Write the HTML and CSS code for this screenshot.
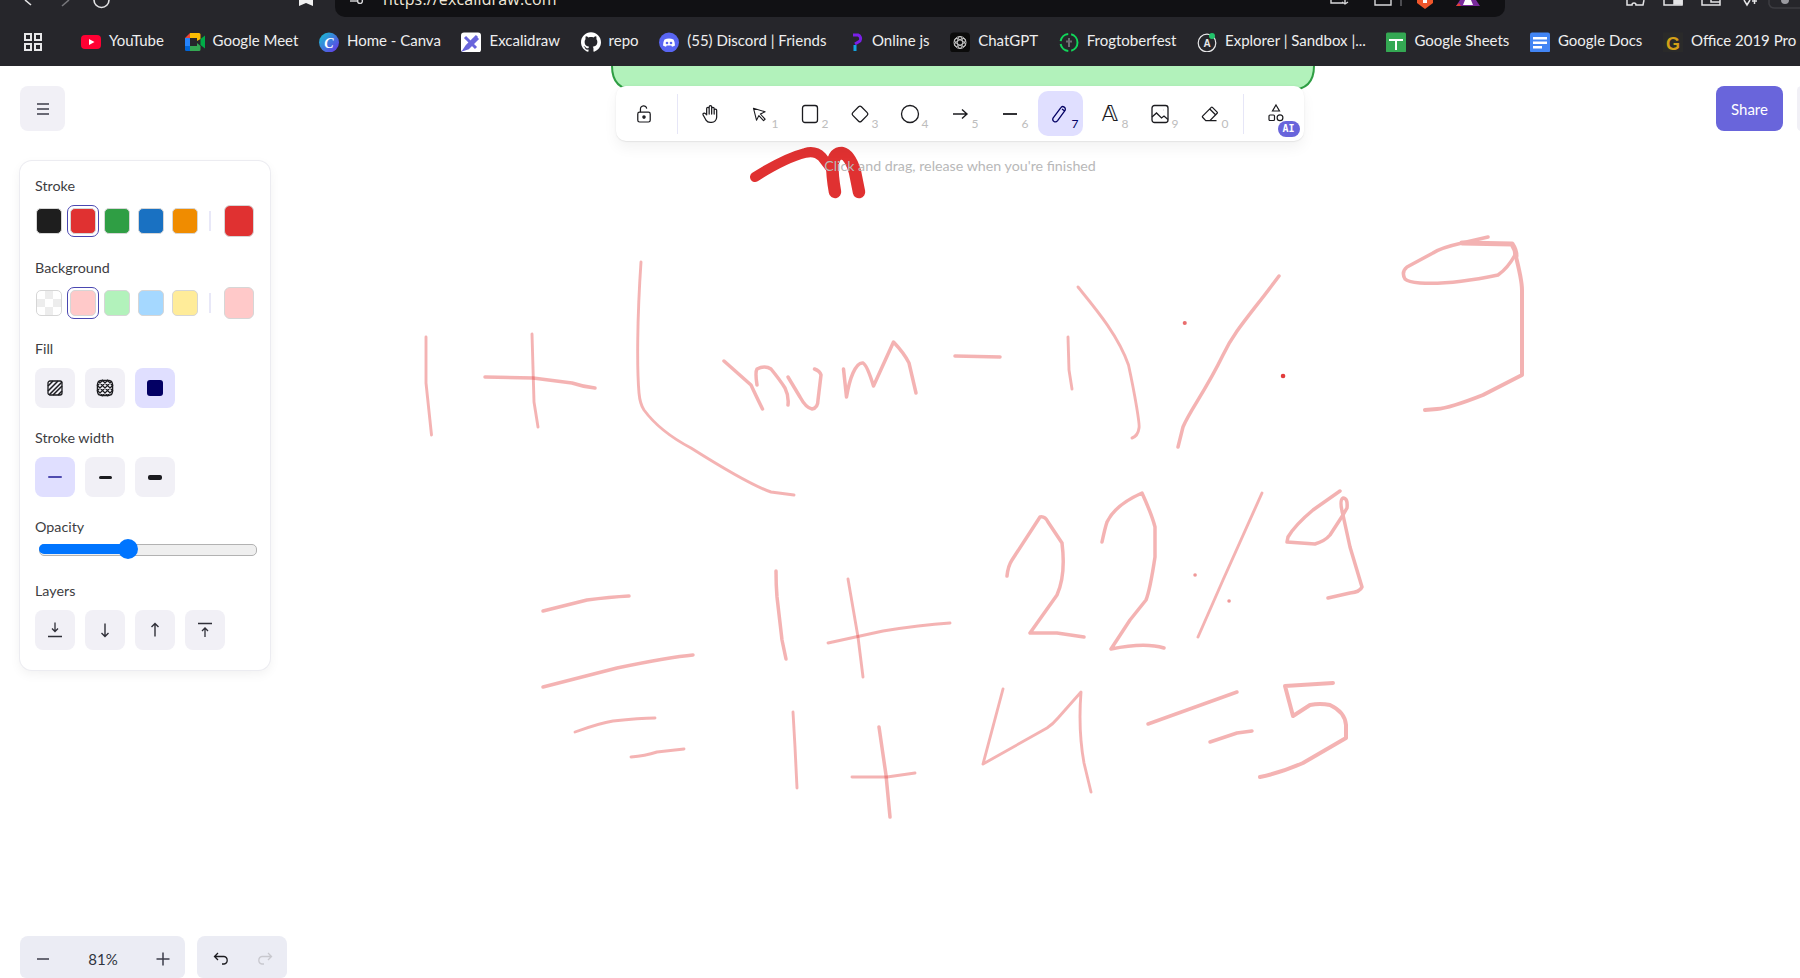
FILE: index.html
```html
<!DOCTYPE html>
<html lang="en">
<head>
<meta charset="utf-8">
<title>Excalidraw</title>
<link rel="stylesheet" href="styles.css">
</head>
<body>
<header class="chrome">
  <div class="topbar">
    <svg class="nav" width="335" height="17" viewBox="0 0 335 17" fill="none" stroke="#e4e4e6" stroke-width="1.6">
      <path d="M25 0l6 5"/>
      <path d="M69 0l-7 6" stroke="#77777c"/>
      <path d="M94 0a7.5 7.5 0 0 0 15 0" />
      <path d="M299 0h14v6l-7-3-7 3z" fill="#f1f1f1" stroke="none"/>
    </svg>
    <div class="url">
      <svg class="tune" width="14" height="17" viewBox="0 0 14 17" fill="none" stroke="#d8d8da" stroke-width="1.4"><path d="M0 1h7"/><circle cx="10" cy="1" r="2.4"/></svg>
      <span class="url-text">https://excalidraw.com</span>
      <svg class="url-tools" width="155" height="17" viewBox="0 0 155 17" fill="none" stroke="#d8d8da" stroke-width="1.4">
        <path d="M2 0v3h12M16 0v4M13 2l3 2 3-2"/>
        <path d="M46 0v5h16V0"/>
        <path d="M72 0v6" stroke="#66666b"/>
        <path d="M88 0h16v3l-8 6-8-6z" fill="#f0562a" stroke="none"/><path d="M94 0h4v3h-4z" fill="#fff" stroke="none"/>
        <path d="M131 0h16l4 6h-24z" fill="#7a2a9c" stroke="none"/><path d="M136 0h6l2 5h-10z" fill="#fff" stroke="none"/><path d="M127 6l3-3 2 3z" fill="#e8402f" stroke="none"/>
      </svg>
    </div>
    <svg class="ext" width="295" height="17" viewBox="0 0 295 17" fill="none" stroke="#e4e4e6" stroke-width="1.5">
      <path d="M122 0v5h5a2 2 0 0 1 4 0h7l1-5"/>
      <path d="M159 0v5h18V0"/><path d="M169 0h8v4h-8z" fill="#e4e4e6"/>
      <path d="M197 0v5h18V0M206 0v2h9"/>
      <path d="M239 0l3 5 3-5M247 1h5M249.500 0v4"/>
      <path d="M264 0v4a6 6 0 0 0 6 4h25" stroke="#3c3c41"/>
      <circle cx="280" cy="0" r="4" fill="#9a9aa0" stroke="none"/>
    </svg>
  </div>
  <nav class="bookmarks">
    <svg class="apps" width="18" height="18" viewBox="0 0 18 18" fill="none" stroke="#e8e8ea" stroke-width="2"><rect x="1" y="1" width="6" height="6"/><rect x="11" y="1" width="6" height="6"/><rect x="1" y="11" width="6" height="6"/><rect x="11" y="11" width="6" height="6"/></svg>
    <span class="bar-divider"></span>
    <a class="bm">
      <svg width="20" height="20" viewBox="0 0 20 20"><rect y="3" width="20" height="14" rx="4" fill="#ff0033"/><path d="M8 7l5.500 3L8 13z" fill="#fff"/></svg>
      <span>YouTube</span>
    </a>
    <a class="bm">
      <svg width="20" height="20" viewBox="0 0 20 20"><path d="M0 6l5-5v5z" fill="#ea4335"/><path d="M5 1h9a1.500 1.500 0 0 1 1.500 1.500V7L12 9V6H5z" fill="#fbbc04"/><path d="M0 6h5v8H0z" fill="#2684fc"/><path d="M0 14h5v5H1.500A1.500 1.500 0 0 1 0 17.500z" fill="#0066da"/><path d="M5 14h7v-3l3.500 3v3.500A1.500 1.500 0 0 1 14 19H5z" fill="#34a853"/><path d="M15.500 7L20 3.500v13L15.500 13z" fill="#00ac47"/><path d="M5 6h7v8H5z" fill="#26262b"/></svg>
      <span>Google Meet</span>
    </a>
    <a class="bm">
      <svg width="20" height="20" viewBox="0 0 20 20"><defs><linearGradient id="canva" x1="0" y1="0" x2="1" y2="1"><stop offset="0" stop-color="#13c6cf"/><stop offset="1" stop-color="#6a2ee8"/></linearGradient></defs><circle cx="10" cy="10.500" r="10" fill="url(#canva)"/><text class="canva-c" x="10" y="16" text-anchor="middle">C</text></svg>
      <span>Home - Canva</span>
    </a>
    <a class="bm">
      <svg width="20" height="20" viewBox="0 0 20 20"><rect width="20" height="20" y="0.500" rx="3" fill="#fff"/><path d="M4 5l11 11M16 4L6 14 4 17l3-1 10-10" stroke="#6965db" stroke-width="3" fill="none"/></svg>
      <span>Excalidraw</span>
    </a>
    <a class="bm">
      <svg width="20" height="20" viewBox="0 0 24 24"><path fill="#fff" d="M12 .297c-6.630 0-12 5.373-12 12 0 5.303 3.438 9.800 8.205 11.385.6.113.82-.258.82-.577 0-.285-.01-1.040-.015-2.040-3.338.724-4.042-1.610-4.042-1.610C4.422 18.070 3.633 17.700 3.633 17.700c-1.087-.744.084-.729.084-.729 1.205.084 1.838 1.236 1.838 1.236 1.070 1.835 2.809 1.305 3.495.998.108-.776.417-1.305.76-1.605-2.665-.3-5.466-1.332-5.466-5.930 0-1.310.465-2.380 1.235-3.220-.135-.303-.54-1.523.105-3.176 0 0 1.005-.322 3.300 1.230.96-.267 1.980-.399 3-.405 1.020.006 2.040.138 3 .405 2.280-1.552 3.285-1.230 3.285-1.230.645 1.653.24 2.873.12 3.176.765.84 1.230 1.910 1.230 3.220 0 4.610-2.805 5.625-5.475 5.920.42.36.81 1.096.81 2.220 0 1.606-.015 2.896-.03 3.286 0 .315.21.69.825.57C20.565 22.092 24 17.592 24 12.297c0-6.627-5.373-12-12-12"/></svg>
      <span>repo</span>
    </a>
    <a class="bm">
      <svg width="20" height="20" viewBox="0 0 20 20"><circle cx="10" cy="10.500" r="10" fill="#5865f2"/><path d="M5.500 7.500q4.500-2 9 0 1.500 2.500 1.500 6-1.500 1-3 1.200l-.7-1.200h-4.600l-.7 1.200q-1.500-.2-3-1.200 0-3.500 1.500-6z" fill="#fff"/><circle cx="8" cy="11" r="1.300" fill="#5865f2"/><circle cx="12" cy="11" r="1.300" fill="#5865f2"/></svg>
      <span>(55) Discord | Friends</span>
    </a>
    <a class="bm bm-wide">
      <svg width="20" height="20" viewBox="0 0 20 20" fill="none" stroke-width="3"><path d="M6 3h5a4 4 0 0 1 2 6l-5 3" stroke="#7a1fe8"/><path d="M8 13v6" stroke="#13a5e0"/></svg>
      <span>Online js</span>
    </a>
    <a class="bm">
      <svg width="20" height="20" viewBox="0 0 20 20" fill="none" stroke="#c6c6c6" stroke-width="1"><rect y="0.500" width="20" height="20" rx="4" fill="#0b0b0b" stroke="none"/><circle cx="10" cy="10.500" r="6"/><ellipse cx="10" cy="10.500" rx="6" ry="2.500" transform="rotate(30 10 10.500)"/><ellipse cx="10" cy="10.500" rx="6" ry="2.500" transform="rotate(-30 10 10.500)"/><ellipse cx="10" cy="10.500" rx="6" ry="2.500" transform="rotate(90 10 10.500)"/></svg>
      <span>ChatGPT</span>
    </a>
    <a class="bm">
      <svg width="20" height="20" viewBox="0 0 20 20" fill="none"><circle cx="10" cy="10.500" r="8.500" stroke="#11d65a" stroke-width="2" stroke-dasharray="11 3"/><path d="M10 6v9M7 9.500h6" stroke="#6d6d72" stroke-width="2"/></svg>
      <span>Frogtoberfest</span>
    </a>
    <a class="bm">
      <svg width="20" height="20" viewBox="0 0 20 20" fill="none"><circle cx="10" cy="11" r="8.800" stroke="#e8e8ea" stroke-width="1.200"/><text class="explorer-a" x="10" y="15" text-anchor="middle">A</text><circle cx="15" cy="4" r="3" fill="#22c36b"/></svg>
      <span>Explorer | Sandbox |...</span>
    </a>
    <a class="bm">
      <svg width="20" height="20" viewBox="0 0 20 20"><rect y="0.500" width="20" height="20" rx="1.500" fill="#34a853"/><path d="M3 7h14v2H3z" fill="#fff"/><path d="M9 7h2v11H9z" fill="#fff"/></svg>
      <span>Google Sheets</span>
    </a>
    <a class="bm">
      <svg width="20" height="20" viewBox="0 0 20 20"><rect y="0.500" width="20" height="20" rx="2" fill="#4285f4"/><path d="M3 5h14v2.500H3zM3 9.500h14V12H3zM3 14h9v2.500H3z" fill="#fff"/></svg>
      <span>Google Docs</span>
    </a>
    <a class="bm">
      <svg width="20" height="20" viewBox="0 0 20 20"><rect y="0.500" width="20" height="20" fill="#2a2a2a"/><text class="office-g" x="10" y="18" text-anchor="middle">G</text></svg>
      <span>Office 2019 Pro Plus</span>
    </a>
  </nav>
</header>

<main class="stage">
  <svg class="canvas" width="1800" height="912" viewBox="0 66 1800 912" fill="none">
    <path class="band" d="M612 40V66q0 24 24 24H1290q24 0 24-24V40Z"/>
    <g class="ink">
      <path d="M426 337V383L431.500 435"/>
      <path d="M532 334L534 402 538 427"/>
      <path class="w3" d="M485 377L533 378 572 383Q584 387 595 388"/>
      <path d="M641 262C637 320 637 370 639 393Q640 404 644 410C655 425 672 438 691 448C710 460 750 485 771 492L794 495"/>
      <path class="w3" d="M724 361L751 385Q758 400 762.500 409M757 385Q755 372 757 369Q765 365 771 369Q780 380 785 388Q789 396 788 405"/>
      <path class="w3" d="M788 377L800 397Q806 408 812 409Q818 408 818 400L821 375Q820 371 814.500 369"/>
      <path class="w3" d="M843.500 369L846.500 397Q849 382 853 373Q858 362 863 363Q867 365 873.500 386L893.500 342Q904 353 909 363L916 393"/>
      <path class="w3" d="M955 356L1000 357"/>
      <path d="M1068 337L1069 370 1072 389"/>
      <path d="M1078 287C1095 308 1118 335 1128.500 365C1135 395 1140 425 1139 428Q1138 436 1132 438"/>
      <path class="w3" d="M1279 276C1250 315 1235 330 1223 355C1205 392 1190 410 1183 427L1178 447"/>
      <g class="merged">
        <path class="w3" d="M1488 237L1462 243Q1440 248 1433 253L1407 267Q1401 272 1405 279Q1408 282 1420 283Q1450 285 1498 275Q1508 268 1515 255"/>
        <path class="w5" d="M1462 243L1512 244Q1516 250 1516 256"/>
        <path class="w4" d="M1515 253Q1522 280 1522 290V375L1483 395Q1450 408 1437 409L1425 410"/>
      </g>
      <path class="dot" d="M1184.700 323h.1"/>
      <path class="dot dark" d="M1283 376h.1"/>
      <path class="w3" d="M543 611L587 600Q610 597 629 596"/>
      <path class="w3" d="M543 687L617 668Q670 657 693 655"/>
      <path class="w3" d="M776 571Q776 585 777 597L782 640 786 659"/>
      <path d="M848 579L858 637 863 677"/>
      <path d="M828 643L883 631Q920 625 950 623"/>
      <path d="M575 732Q600 723 613 721Q640 718 655 718"/>
      <path d="M631 757Q645 756 657 752L684 749"/>
      <path d="M793 712L795 747 797 788"/>
      <path class="w3" d="M879 727L886 775 890 817"/>
      <path d="M852 777H887L915 773"/>
      <path class="w3" d="M1007 576Q1008 566 1012 560L1040 517Q1045 516 1048 522L1062 543Q1066 575 1057 595L1030 633H1057L1084 637"/>
      <path class="w3" d="M1102 542Q1105 528 1107 522Q1115 505 1142 493Q1152 515 1155 527V557Q1150 590 1146 600L1130 620 1111 649Q1145 642 1164 648"/>
      <path d="M1262 493L1223 580 1198 637"/>
      <path class="dot small" d="M1195 575h.1"/>
      <path class="dot small" d="M1229 601h.1"/>
      <g class="merged">
        <path class="w3" d="M1340 491L1313 510Q1295 525 1288 537L1287 542 1315 544Q1325 541 1330 535L1343 515"/>
        <path class="w3" d="M1343 515Q1339 500 1343 498Q1348 498 1347 508L1343 515 1350 547 1362 587Q1360 592 1350 593L1328 598"/>
      </g>
      <path d="M1003 689L983 764 1047 728Q1053 724 1058 718L1081 692Q1078 730 1084 763L1091 792"/>
      <path class="w3" d="M1148 724L1237 692"/>
      <path class="w3" d="M1210 742L1237 733 1252 731"/>
      <path class="w4" d="M1333 683L1285 686 1293 716 1310 705Q1320 703 1330 705Q1345 712 1346 725V738L1303 763Q1280 773 1260 777"/>
    </g>
    <g class="live">
      <path d="M755 177Q785 158 805 153Q815 150 822 157L832 170"/>
      <path class="legs" d="M835 192Q832 175 832.500 165Q834 153 842 153Q850 155 855 172L859 192"/>
    </g>
  </svg>

  <div class="ui">
    <div class="top-row">
      <button class="menu-btn">
        <svg width="16" height="16" viewBox="0 0 16 16" fill="none" stroke="#3d3d4a" stroke-width="1.300"><path d="M2 3h12M2 8h12M2 13h12"/></svg>
      </button>
      <div class="toolbar-wrap">
        <div class="toolbar">
          <button class="tool">
            <svg width="16" height="18" viewBox="0 0 18 20" fill="none" stroke="#1b1b1f" stroke-width="1.400"><rect x="2" y="8" width="14" height="11" rx="2"/><path d="M5 8V4.500a3.500 3.500 0 0 1 7-.5"/><circle cx="9" cy="13.500" r="1.300" fill="#1b1b1f"/></svg>
          </button>
          <span class="divider"></span>
          <button class="tool">
            <svg width="20" height="20" viewBox="0 0 24 24" fill="none" stroke="#1b1b1f" stroke-width="1.500" stroke-linecap="round" stroke-linejoin="round"><path d="M8 13v-7.500a1.500 1.500 0 0 1 3 0v6.500M11 5.500v-2a1.500 1.500 0 1 1 3 0v8.500M14 5.500a1.500 1.500 0 0 1 3 0v6.500M17 7.500a1.500 1.500 0 0 1 3 0v8.500a6 6 0 0 1-6 6h-2h.208a6 6 0 0 1-5.012-2.700a69.740 69.740 0 0 1-.196-.3c-.312-.479-1.407-2.388-3.286-5.728a1.500 1.500 0 0 1 .536-2.022a1.867 1.867 0 0 1 2.280.28l1.470 1.470"/></svg>
          </button>
          <button class="tool">
            <svg width="16" height="16" viewBox="0 0 22 22" fill="none" stroke="#1b1b1f" stroke-width="1.500" stroke-linejoin="round"><path d="M6.200 19.500L2 3l16 5-6.500 3 6.500 7.200-2.200 2-6.300-7z"/></svg><span class="key">1</span>
          </button>
          <button class="tool">
            <svg width="18" height="20" viewBox="0 0 18 20" fill="none" stroke="#1b1b1f" stroke-width="1.300"><rect x="1.500" y="1.500" width="15" height="17" rx="2.500"/></svg><span class="key">2</span>
          </button>
          <button class="tool">
            <svg width="20" height="20" viewBox="0 0 20 20" fill="none" stroke="#1b1b1f" stroke-width="1.300"><path d="M8.600 2.800a2 2 0 0 1 2.800 0l5.800 5.800a2 2 0 0 1 0 2.800l-5.800 5.800a2 2 0 0 1-2.800 0l-5.800-5.800a2 2 0 0 1 0-2.800z"/></svg><span class="key">3</span>
          </button>
          <button class="tool">
            <svg width="20" height="20" viewBox="0 0 20 20" fill="none" stroke="#1b1b1f" stroke-width="1.300"><circle cx="10" cy="10" r="8.500"/></svg><span class="key">4</span>
          </button>
          <button class="tool">
            <svg width="20" height="20" viewBox="0 0 20 20" fill="none" stroke="#1b1b1f" stroke-width="1.400"><path d="M3 10h14M12 5.500l5 4.500-5 4.500"/></svg><span class="key">5</span>
          </button>
          <button class="tool">
            <svg width="20" height="20" viewBox="0 0 20 20" fill="none" stroke="#1b1b1f" stroke-width="1.800"><path d="M3 10h14"/></svg><span class="key">6</span>
          </button>
          <button class="tool active">
            <svg width="18" height="18" viewBox="0 0 18 18" fill="none" stroke="#030064" stroke-width="1.300" stroke-linejoin="round"><path d="M3 16.500c-1.300-.8-1.400-2.500-.8-3.700l7.500-10a2.500 2.500 0 0 1 4.200 2.800l-7.300 10c-.8 1-2.500 1.600-3.600.9zM11 4l3 2.200"/></svg><span class="key">7</span>
          </button>
          <button class="tool">
            <span class="glyph-a">𝔸</span><span class="key">8</span>
          </button>
          <button class="tool">
            <svg width="20" height="22" viewBox="0 0 20 22" fill="none" stroke="#1b1b1f" stroke-width="1.300"><rect x="2" y="2.500" width="16" height="17" rx="2.500"/><path d="M2 14l4.500-4 5 5 2.500-2 4 3.500"/><path d="M13 7h.1" stroke-width="1.800"/></svg><span class="key">9</span>
          </button>
          <button class="tool">
            <svg width="19" height="19" viewBox="0 0 24 24" fill="none" stroke="#1b1b1f" stroke-width="1.600" stroke-linecap="round" stroke-linejoin="round"><path d="M19 21h-13l-4-4.300a1 1 0 0 1 0-1.410l11-11a1 1 0 0 1 1.410 0l6 6a1 1 0 0 1 0 1.410l-9.200 9.300M18 13.300l-6.300-6.300"/></svg><span class="key">0</span>
          </button>
          <span class="divider"></span>
          <button class="tool">
            <svg class="shapes" width="18" height="20" viewBox="0 0 18 20" fill="none" stroke="#1b1b1f" stroke-width="1.200"><path d="M9 2l3.500 6h-7z"/><rect x="2" y="12" width="5.500" height="5.500" rx="1"/><circle cx="13" cy="14.700" r="2.900"/></svg>
            <span class="ai">AI</span>
          </button>
        </div>
        <div class="hint">Click and drag, release when you're finished</div>
      </div>
      <button class="share">Share</button>
      <span class="library"></span>
    </div>

    <aside class="panel">
      <section class="group">
        <h3>Stroke</h3>
        <div class="colors">
          <span class="sw c-black"></span>
          <span class="sw c-red sel"></span>
          <span class="sw c-green"></span>
          <span class="sw c-blue"></span>
          <span class="sw c-orange"></span>
          <span class="v-rule"></span>
          <span class="sw big c-red"></span>
        </div>
      </section>
      <section class="group">
        <h3>Background</h3>
        <div class="colors">
          <span class="sw c-none"></span>
          <span class="sw c-lred sel"></span>
          <span class="sw c-lgreen"></span>
          <span class="sw c-lblue"></span>
          <span class="sw c-lyellow"></span>
          <span class="v-rule"></span>
          <span class="sw big c-lred"></span>
        </div>
      </section>
      <section class="group">
        <h3>Fill</h3>
        <div class="btns">
          <button class="pbtn">
            <svg width="16" height="16" viewBox="0 0 16 16" fill="none" stroke="#1b1b1f"><rect x="1" y="1" width="14" height="14" rx="2" stroke-width="1.300"/><path d="M1 6l5-5M1 11L11 1M2 15L15 2M6 15l9-9M11 15l4-4" stroke-width="1.500"/></svg>
          </button>
          <button class="pbtn">
            <svg width="18" height="18" viewBox="0 0 18 18" fill="none" stroke="#1b1b1f"><rect x="1.500" y="1.500" width="15" height="15" rx="4" stroke-width="1.500"/><path d="M1 7l6-6M1 12L12 1M2 16L16 2M6 17L17 6M11 17l6-6M11 1l6 6M6 1l11 11M2 2l14 14M1 6l11 11M1 11l6 6" stroke-width="1.100"/></svg>
          </button>
          <button class="pbtn on">
            <span class="solid"></span>
          </button>
        </div>
      </section>
      <section class="group">
        <h3>Stroke width</h3>
        <div class="btns">
          <button class="pbtn on"><span class="sline s1"></span></button>
          <button class="pbtn"><span class="sline s2"></span></button>
          <button class="pbtn"><span class="sline s3"></span></button>
        </div>
      </section>
      <section class="group">
        <h3 class="tight">Opacity</h3>
        <div class="slider"><span class="slider-fill"></span><span class="slider-thumb"></span></div>
      </section>
      <section class="group">
        <h3>Layers</h3>
        <div class="btns">
          <button class="pbtn"><svg width="18" height="18" viewBox="0 0 18 18" fill="none" stroke="#2f2f38" stroke-width="1.300"><path d="M9 1.500v9M6 7.500l3 3 3-3M2 15.500h14"/></svg></button>
          <button class="pbtn"><svg width="18" height="18" viewBox="0 0 18 18" fill="none" stroke="#2f2f38" stroke-width="1.400"><path d="M9 2.500v13M5.500 12l3.500 3.500 3.500-3.500"/></svg></button>
          <button class="pbtn"><svg width="18" height="18" viewBox="0 0 18 18" fill="none" stroke="#2f2f38" stroke-width="1.400"><path d="M9 15.500v-13M5.500 6L9 2.500 12.500 6"/></svg></button>
          <button class="pbtn"><svg width="18" height="18" viewBox="0 0 18 18" fill="none" stroke="#2f2f38" stroke-width="1.300"><path d="M2 2.500h14M9 16V7M6 10l3-3 3 3"/></svg></button>
        </div>
      </section>
    </aside>

    <footer class="bottom">
      <div class="island zoom">
        <button class="ibtn"><svg width="14" height="14" viewBox="0 0 14 14" fill="none" stroke="#3d3d4a" stroke-width="1.500"><path d="M1 7h12"/></svg></button>
        <span class="zoom-val">81%</span>
        <button class="ibtn"><svg width="14" height="14" viewBox="0 0 14 14" fill="none" stroke="#3d3d4a" stroke-width="1.500"><path d="M0.500 7h13M7 0.500v13"/></svg></button>
      </div>
      <div class="island undo">
        <button class="ibtn"><svg width="16" height="14" viewBox="0 0 16 14" fill="none" stroke="#1b1b1f" stroke-width="1.300"><path d="M5 1L1.500 4.500 5 8M1.500 4.500H11a3.800 3.800 0 0 1 0 7.500H9"/></svg></button>
        <button class="ibtn"><svg width="16" height="14" viewBox="0 0 16 14" fill="none" stroke="#c8c8ce" stroke-width="1.300"><path d="M11 1l3.500 3.500L11 8M14.500 4.500H5a3.800 3.800 0 0 0 0 7.500h2"/></svg></button>
      </div>
    </footer>
  </div>
</main>
</body>
</html>
```
FILE: styles.css
```css
* { box-sizing: border-box; }
html, body { margin: 0; height: 100%; overflow: hidden; background: #fff; }
body { display: flex; flex-direction: column; width: 1800px; height: 978px; font-family: "Lato", "Noto Sans", sans-serif; }
button { border: 0; padding: 0; margin: 0; font: inherit; cursor: pointer; }

.chrome { flex: none; height: 66px; background: #26262b; overflow: hidden; }
.topbar { display: flex; height: 17px; overflow: hidden; }
.nav, .ext { flex: none; display: block; }
.url { flex: none; width: 1170px; height: 17px; background: #111114; border-radius: 0 0 10px 10px; display: flex; position: relative; overflow: hidden; padding-left: 15px; }
.tune { flex: none; }
.url-text { margin: -11px 0 0 19px; height: 20px; font: 16px/20px "Open Sans", sans-serif; color: #f0e9da; letter-spacing: .15px; }
.url-tools { margin-left: auto; margin-right: 21px; flex: none; }
.bookmarks { height: 49px; display: flex; align-items: center; color: #eeeeef; font: 15px/20px "Lato", sans-serif; padding-left: 24px; }
.apps { flex: none; }
.bar-divider { width: 2px; height: 20px; background: #17171a; margin: 0 20px 0 19px; }
.bm { display: flex; align-items: center; gap: 8px; margin-right: 20.600px; white-space: nowrap; flex: none; }
.bm span { margin-bottom: 3px; }
.bm svg { display: block; flex: none; }
.bm-wide { gap: 5px; }
.canva-c { font: italic 700 14px "Liberation Serif", serif; fill: #fff; }
.explorer-a { font: 700 10px "Liberation Sans", sans-serif; fill: #e8e8ea; }
.office-g { font: 700 18px "Liberation Sans", sans-serif; fill: #d4a017; }

.stage { flex: 1; position: relative; overflow: hidden; }
.canvas { position: absolute; inset: 0; display: block; }
.band { fill: #b2f2bb; stroke: #2f9e44; stroke-width: 2; }
.ink path { stroke: #e03131; stroke-opacity: .37; stroke-width: 2.900; stroke-linecap: round; stroke-linejoin: round; }
.ink path.w3 { stroke-width: 3.500; }
.ink path.w4 { stroke-width: 4; }
.ink path.w5 { stroke-width: 5; }
.ink .merged { opacity: .37; }
.ink .merged path { stroke-opacity: 1; }
.ink path.dot { stroke-width: 4; stroke-opacity: .7; }
.ink path.dot.dark { stroke-width: 4.500; stroke-opacity: .95; }
.ink path.dot.small { stroke-width: 3.500; stroke-opacity: .5; }
.live path { stroke: #e03131; stroke-width: 10; stroke-linecap: round; stroke-linejoin: round; }
.live path.legs { stroke-width: 12.500; }

.ui { position: absolute; inset: 0; display: flex; flex-direction: column; padding: 20px 0 0 20px; }
.top-row { display: flex; align-items: flex-start; height: 45px; flex: none; }
.menu-btn { width: 45px; height: 45px; border-radius: 8px; background: #f1f0f6; display: flex; align-items: center; justify-content: center; flex: none; }
.toolbar-wrap { position: relative; margin-left: 551px; flex: none; }
.toolbar { display: flex; align-items: center; gap: 5px; width: 688px; height: 55px; padding: 0 5.500px; background: #fff; border-radius: 10px; box-shadow: 0 7px 14px rgba(0,0,0,.05), 0 0 3px rgba(0,0,0,.05), 0 1px 1px rgba(0,0,0,.05); }
.tool { position: relative; width: 45px; height: 45px; flex: none; border-radius: 10px; background: transparent; display: flex; align-items: center; justify-content: center; }
.tool.active { background: #e0dfff; }
.key { position: absolute; right: 4px; bottom: 5px; font: 12px/14px "Lato", sans-serif; color: #bdbdbd; }
.active .key { color: #030064; }
.glyph-a { font: 22px/24px "DejaVu Sans", sans-serif; color: #1b1b1f; }
.divider { width: 1px; height: 40px; background: #e6e6f7; margin: 0 5px; flex: none; }
.shapes { margin-bottom: 2px; }
.ai { position: absolute; right: -1px; bottom: -1px; width: 22px; height: 16px; border-radius: 8px; background: #6965db; color: #fff; font: 700 10px/16px "DejaVu Sans Mono", monospace; text-align: center; }
.hint { position: absolute; top: 71px; left: 0; right: 0; text-align: center; font-size: 14.250px; line-height: 18px; color: #b8b8b8; }
.share { margin-left: auto; margin-right: 17px; width: 67px; height: 45px; border-radius: 8px; background: #6965db; color: #fff; font-size: 15px; flex: none; }
.library { position: absolute; right: -6px; top: 20px; width: 9px; height: 45px; background: #f1f0f6; border-radius: 8px; }

.panel { flex: none; width: 250px; height: 509px; margin-top: 30px; padding: 15px 15px 0; background: #fff; border-radius: 12px; box-shadow: 0 0 0 1px #ececf1, 0 4px 12px rgba(0,0,0,.06); display: flex; flex-direction: column; gap: 20px; }
.group:first-child { margin-bottom: 1px; }
.group h3 { margin: 0 0 9px; height: 20px; font-weight: 400; font-size: 14.300px; line-height: 20px; color: #3d3d42; }
.group h3.tight { margin-bottom: 2px; }
.colors { display: flex; align-items: center; height: 32px; gap: 8px; padding-left: .500px; }
.sw { position: relative; width: 26px; height: 26px; border-radius: 5px; border: 1px solid #d6d6d6; flex: none; }
.sw.sel::after { content: ""; position: absolute; inset: -4px; border: 1px solid #4a47b1; border-radius: 7px; }
.sw.big { width: 30px; height: 32px; border-radius: 6px; }
.v-rule { width: 2px; height: 20px; background: #e8e8f8; margin: 0 5px 0 3.500px; flex: none; }
.c-black { background: #1e1e1e; }
.c-red { background: #e03131; }
.c-green { background: #2f9e44; }
.c-blue { background: #1971c2; }
.c-orange { background: #f08c00; }
.c-lred { background: #ffc9c9; }
.c-lgreen { background: #b2f2bb; }
.c-lblue { background: #a5d8ff; }
.c-lyellow { background: #ffec99; }
.c-none { background: conic-gradient(#ededed 25%, #fff 0 50%, #ededed 0 75%, #fff 0) 0 0 / 16px 16px; }
.btns { display: flex; gap: 10px; }
.pbtn { width: 40px; height: 40px; border-radius: 8px; background: #f1f0f6; display: flex; align-items: center; justify-content: center; flex: none; }
.pbtn.on { background: #e0dfff; }
.solid { width: 16px; height: 16px; border-radius: 3px; background: #030064; }
.sline { display: block; width: 13px; background: #1b1b1f; border-radius: 2px; }
.s1 { height: 2px; width: 14px; background: #4f4bb0; }
.s2 { height: 3px; }
.s3 { height: 5px; width: 14px; }
.slider { position: relative; height: 22px; margin: 0 0 0 4px; display: flex; align-items: center; width: 218px; }
.slider::before { content: ""; position: absolute; left: 0; right: 0; top: 5px; height: 10px; background: #efefef; border: 1px solid #b2b2b2; border-radius: 5px; }
.slider-fill { position: absolute; left: 0; top: 5px; width: 90px; height: 10px; background: #0075ff; border-radius: 5px 0 0 5px; }
.slider-thumb { position: absolute; left: 79px; top: 0; width: 20px; height: 20px; border-radius: 50%; background: #0075ff; }

.bottom { margin-top: auto; display: flex; gap: 12px; flex: none; }
.island { height: 42px; padding-top: 3px; background: #ebecf4; border-radius: 8px 8px 6px 6px; display: flex; align-items: center; }
.zoom { width: 165px; justify-content: space-between; padding-left: 15px; padding-right: 14px; }
.undo { width: 90px; justify-content: space-between; padding-left: 16px; padding-right: 14px; }
.ibtn { width: 16px; height: 16px; background: transparent; display: flex; align-items: center; justify-content: center; flex: none; }
.zoom-val { font-size: 15px; line-height: 20px; color: #2f3440; }
```
